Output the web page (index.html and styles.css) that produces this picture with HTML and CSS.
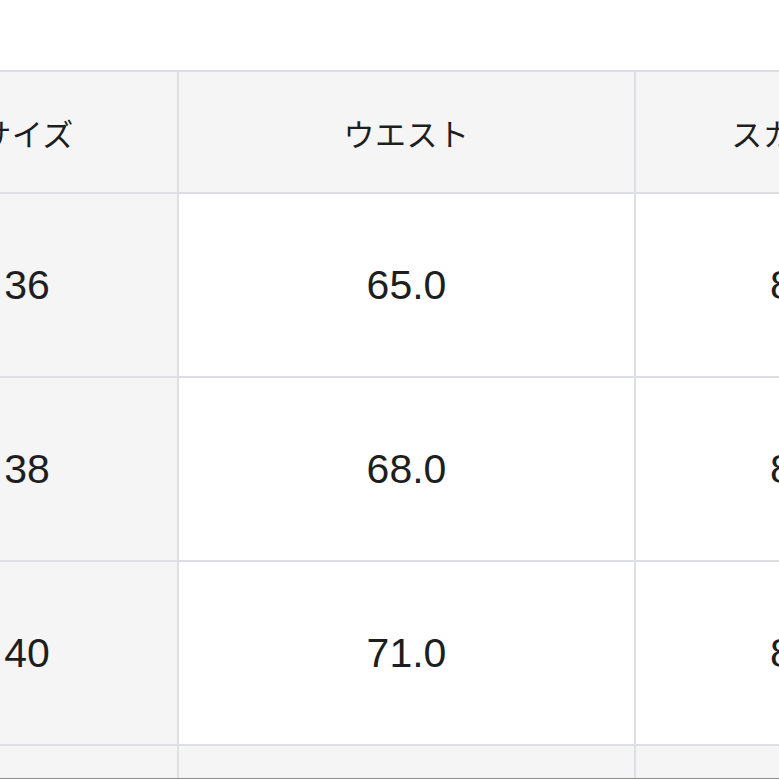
FILE: index.html
```html
<!DOCTYPE html>
<html lang="ja">
<head>
<meta charset="utf-8">
<title>サイズ表</title>
<link rel="stylesheet" href="styles.css">
</head>
<body>
<div class="frame">
  <table class="size-table">
    <thead>
      <tr>
        <th class="c1">サイズ</th>
        <th class="c2">ウエスト</th>
        <th class="c3">スカート丈</th>
      </tr>
    </thead>
    <tbody>
      <tr>
        <th class="rowhead">36</th>
        <td>65.0</td>
        <td>80.0</td>
      </tr>
      <tr>
        <th class="rowhead">38</th>
        <td>68.0</td>
        <td>81.0</td>
      </tr>
      <tr>
        <th class="rowhead">40</th>
        <td>71.0</td>
        <td>82.0</td>
      </tr>
      <tr class="shaded">
        <th class="rowhead">42</th>
        <td>74.0</td>
        <td>83.0</td>
      </tr>
    </tbody>
  </table>
</div>
</body>
</html>
```
FILE: styles.css
```css
html, body {
  margin: 0;
  padding: 0;
  overflow: hidden;
  background: #ffffff;
}

.frame {
  width: 779px;
  height: 779px;
  overflow: hidden;
  box-sizing: border-box;
  padding-top: 70px;
  border-bottom: 1px solid #8c8c8c;
}

.size-table {
  margin-left: -125px;
  border-collapse: separate;
  border-spacing: 0;
  table-layout: fixed;
  width: 1111px;
  border-top: 2px solid #dddfe2;
  border-left: 2px solid #dddfe2;
  color: #1e1e1e;
}

.size-table th,
.size-table td {
  padding: 0;
  border-right: 2px solid #dddfe2;
  border-bottom: 2px solid #dddfe2;
  text-align: center;
  vertical-align: middle;
  font-weight: normal;
}

.size-table thead th {
  height: 120px;
  background: #f5f5f5;
  font-family: "Noto Sans CJK JP", "Noto Sans", sans-serif;
  font-size: 31px;
  letter-spacing: 0.5px;
}

.c1 { width: 300px; }
.c2 { width: 455px; }
.c3 { width: 348px; }

.size-table tbody th,
.size-table tbody td {
  height: 182px;
  font-family: "Liberation Sans", Arial, sans-serif;
  font-size: 41px;
  background: #ffffff;
}

.size-table tbody .rowhead {
  background: #f5f5f5;
}

.size-table tbody .shaded th,
.size-table tbody .shaded td {
  background: #f5f5f5;
}
```
